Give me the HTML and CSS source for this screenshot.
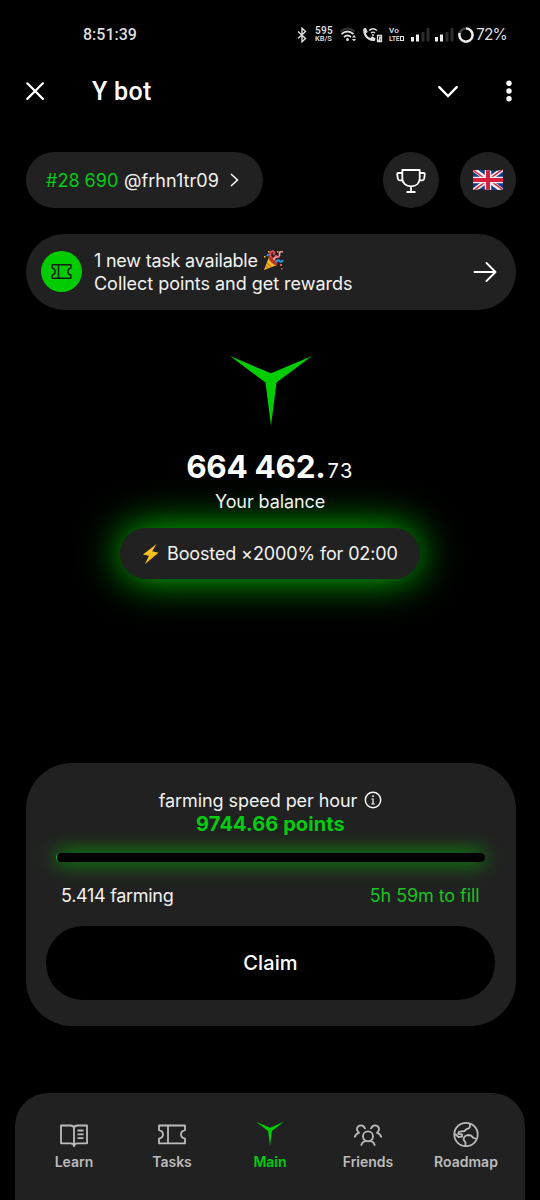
FILE: index.html
```html
<!DOCTYPE html>
<html lang="en">
<head>
<meta charset="utf-8">
<title>Y bot</title>
<link rel="stylesheet" href="styles.css">
</head>
<body>
<div class="app">
  <div class="status">
    <span class="clock">8:51:39</span>
    <div class="status-icons">
      <svg class="bt" width="10" height="16" viewBox="0 0 10 16" fill="none" stroke="#ddd" stroke-width="1.4"><path d="M1 4.500l7.500 7L5 14.800V1.200l3.500 3.300L1 11.500"/></svg>
      <span class="net"><span>595</span><span>KB/S</span></span>
      <svg class="wifi" width="18" height="16" viewBox="0 0 18 16" fill="none" stroke="#ddd" stroke-width="1.700"><path stroke="#333" d="M0.500 4.500Q7.500-1.500 14.500 4.500"/><path d="M1.500 7Q7.500 2 13.500 7M4 10Q7.500 7 11 10"/><circle cx="7.500" cy="12.500" r="1.500" fill="#ddd" stroke="none"/><path fill="#ddd" stroke="none" d="M12 10.500l2-2.500 2 2.500zM12 12l2 2.500 2-2.500z"/></svg>
      <svg class="call" width="21" height="16" viewBox="0 0 21 16" fill="none" stroke="#ddd" stroke-width="1.300"><path fill="#ddd" stroke="none" d="M1.500 1.500L4 1l1.700 4-1.800 1.500c1 2.200 2.200 3.500 4.400 4.600L10 9.300l3.500 2-.5 2.400C6 15.500-.2 8 1.500 1.500z"/><path d="M7 3.500q4-3.500 8 0M9 6q2-1.800 4 0"/><circle cx="11" cy="8" r="1" fill="#ddd" stroke="none"/><path d="M15.500 8.500h4v6h-4zM17 10.500h1.500l-1.500 2.500h1.500"/></svg>
      <span class="net volte"><span>Vo</span><span>LTE<i></i></span></span>
      <svg class="sig" width="19" height="14" viewBox="0 0 19 14"><path fill="#eee" d="M0 9h3v4.500H0zM5 6.500h3v7H5z"/><path fill="#2c2c2c" d="M10.500 4h3v9.500h-3zM15.500 0h3v13.500h-3z"/></svg>
      <svg class="sig2" width="19" height="14" viewBox="0 0 19 14"><path fill="#eee" d="M0 9h3v4.500H0zM5 6.500h3v7H5z"/><path fill="#2c2c2c" d="M10.500 4h3v9.500h-3zM15.500 0h3v13.500h-3z"/></svg>
      <svg class="bat" width="16" height="16" viewBox="0 0 16 16" fill="none" stroke-width="2.400"><circle cx="8" cy="8" r="6.600" stroke="#444"/><path stroke="#eee" d="M8 1.400A6.600 6.600 0 1 1 1.700 6"/></svg>
      <span class="pct">72%</span>
    </div>
  </div>

  <header class="header">
    <svg width="20" height="20" viewBox="0 0 20 20" fill="none" stroke="#fff" stroke-width="2.200" stroke-linecap="round"><path d="M2.300 2.300l15.600 15.600M17.900 2.300L2.300 17.900"/></svg>
    <h1 class="title">Y bot</h1>
    <svg class="chev" width="22" height="14" viewBox="0 0 22 14" fill="none" stroke="#fff" stroke-width="2.400" stroke-linecap="round"><path d="M2.300 3.200L11 12l8.700-8.800"/></svg>
    <svg width="6" height="22" viewBox="0 0 6 22" fill="#fff"><circle cx="3" cy="3.300" r="2.700"/><circle cx="3" cy="11" r="2.700"/><circle cx="3" cy="18.700" r="2.700"/></svg>
  </header>

  <div class="profile-row">
    <div class="profile">
      <span class="rank">#28 690</span><span class="user">@frhn1tr09</span>
      <svg width="9" height="14" viewBox="0 0 9 14" fill="none" stroke="#fff" stroke-width="1.500"><path d="M1 1l6.500 6L1 13"/></svg>
    </div>
    <div class="round trophy">
      <svg width="30" height="26" viewBox="0 0 30 26" fill="none" stroke="#fff" stroke-width="1.800" stroke-linejoin="round"><path d="M6.300 3h17.400v8.300c0 4.900-3.600 8-8.700 8s-8.700-3.100-8.700-8zM6 6H2.200q-1 0-1 1l.6 4.500q.2 1.800 2 1.800h2.700M24 6h3.800q1 0 1 1l-.6 4.500q-.2 1.800-2 1.800h-2.700M15 19.500V25M10.500 25h9"/></svg>
    </div>
    <div class="round">
      <svg width="30" height="22" viewBox="0 0 30 22"><defs><clipPath id="flag"><path d="M0 1.500Q7 0 15 1.200T30 .8v19.500q-7 1.500-15 .5T0 21z"/></clipPath></defs><g clip-path="url(#flag)"><path fill="#173b86" d="M0 0h30v22H0z"/><path stroke="#eee" stroke-width="4.500" d="M0 0l30 22M30 0L0 22"/><path stroke="#d6203f" stroke-width="1.500" d="M0 1l13 9.500M30 0L17 9.500M0 22l13-9.500M30 21l-13-9.500"/><path stroke="#eee" stroke-width="6.500" d="M15 0v22M0 11h30"/><path stroke="#d6203f" stroke-width="4" d="M15 0v22M0 11h30"/></g></svg>
    </div>
  </div>

  <div class="banner">
    <div class="badge"><svg width="21" height="15" viewBox="0 0 28 20" fill="none" stroke="#102010" stroke-width="2" stroke-linejoin="round"><path d="M1.500 1h25v4.200q-4 .8-4 4.800t4 4.800V19h-25v-4.200q4-.8 4-4.800t-4-4.800zM10 1v18"/></svg></div>
    <div class="banner-text">
      <div class="line"><span class="task">1 new task available</span><svg class="party" width="21" height="21" viewBox="0 0 21 21" fill="none"><path fill="#fbb92c" d="M1 20L6 7q5 2 8 8z"/><path stroke="#c96f14" stroke-width="1.200" d="M4 13l4 4M3 16l2 2"/><ellipse cx="10" cy="10.500" rx="2.600" ry="6" transform="rotate(-43 10 10.500)" fill="#b33a28"/><path stroke="#ee4a55" stroke-width="2" d="M8 7q-2-3 0-5 2-1.500 3 0t-1 2.500M10 9q3-1 3-4"/><path stroke="#f29aa0" stroke-width="1.700" d="M11 10q0-3 3-3t2.500-3T20 2"/><path stroke="#2c9be0" stroke-width="2" d="M13 12q2-3 3.500-1t3.500-1M4 6l1.500-2"/><path fill="#f6c63a" d="M5 1h1.500v1.500H5zM14 1h1.500v1.500H14zM1 6h1.500v1.500H1z"/><path fill="#ef5267" d="M17 14h2v2h-2zM15 6h2v1.500h-2zM18 18h1.500v1.500H18z"/></svg></div>
      <div class="line collect">Collect points and get rewards</div>
    </div>
    <svg width="24" height="20" viewBox="0 0 24 20" fill="none" stroke="#fff" stroke-width="1.800" stroke-linecap="round" stroke-linejoin="round"><path d="M1.500 10h21M13.500 1l9 9-9 9"/></svg>
  </div>

  <svg class="logo" width="82" height="70" viewBox="0 0 82 70" fill="#0c0"><path d="M0 0l41 17.300L82 0 46.500 26.500 41 70l-5.500-43.500z"/></svg>
  <div class="balance"><b class="whole">664 462.</b><span class="cents">73</span></div>
  <div class="balance-label">Your balance</div>
  <div class="boost">
    <svg width="17" height="20" viewBox="0 0 17 20"><path fill="#fcc21b" d="M14.500 0L1 10.500l6 1.200L3 20 16.500 8.800l-6.300-1.500z"/><path fill="#f79329" d="M1 10.500l7-1-1 2.200zM16.500 8.800L3 20l9-9.500z" opacity=".4"/></svg>
    <span class="boost-text">Boosted ×2000% for 02:00</span>
  </div>

  <section class="farm">
    <div class="speed"><span>farming speed per hour</span><svg width="18" height="18" viewBox="0 0 18 18" fill="none" stroke="#fff" stroke-width="1.400"><circle cx="9" cy="9" r="7.700"/><path d="M7.500 8H9v5M7.300 13h3.400" stroke-width="1.200"/><circle cx="9" cy="5.200" r=".9" fill="#fff" stroke="none"/></svg></div>
    <div class="points">9744.66 points</div>
    <div class="bar"></div>
    <div class="stats"><span class="farmed">5.414 farming</span><span class="fill">5h 59m to fill</span></div>
    <button class="claim"><span>Claim</span></button>
  </section>

  <nav class="nav">
    <a class="tab"><svg width="28" height="26" viewBox="0 0 28 26" fill="none" stroke="#bbb" stroke-width="1.800" stroke-linejoin="round"><path d="M1 4.500h9.500Q14 4.500 14 7.500q0-3 3.500-3H27v17.800h-9.500q-3.500 0-3.500 3 0-3-3.500-3H1zM14 7.500v17.500M17.500 9.500h6M17.500 13.300h6M17.500 17.100h6"/></svg><span>Learn</span></a>
    <a class="tab"><svg width="28" height="26" viewBox="0 0 28 26" fill="none" stroke="#bbb" stroke-width="1.800" stroke-linejoin="round"><path d="M1 4.500h26v4.700q-4 .9-4 4.200t4 4.200v4.700H1v-4.700q4-.9 4-4.200T1 9.200zM10 4.500v17.800"/></svg><span>Tasks</span></a>
    <a class="tab active"><svg width="28" height="26" viewBox="0 0 28 26" fill="#0c0"><path d="M0 .8l14 6 14-6-12.100 9.100L14 25l-1.900-15.100z"/></svg><span>Main</span></a>
    <a class="tab"><svg width="28" height="26" viewBox="0 0 28 26" fill="none" stroke="#bbb" stroke-width="1.800" stroke-linecap="round"><circle cx="14" cy="15.300" r="5"/><path d="M7.300 24q1-3.200 4-4M20.700 24q-1-3.200-4-4M.9 15.800q.8-3 4-4M27.100 15.800q-.8-3-4-4M5 11.800C.8 8 4 4.300 7 4.300q2.500 0 4 3M23 11.800c4.200-3.800 1-7.500-2-7.500q-2.500 0-4 3"/></svg><span>Friends</span></a>
    <a class="tab"><svg width="28" height="26" viewBox="0 0 28 26" fill="none" stroke="#bbb" stroke-width="1.800" stroke-linejoin="round"><circle cx="14" cy="13.500" r="11.700"/><path d="M18 2.700v2.500q0 2-3.500 3L12.500 10 7 10.800l-1 2 4 .7v2.200l-3.500.3-3.500-3M13.500 25v-3.500l-2-3 1-3 3-1.500 3.500.5 2.500 2.500 3.500 1"/></svg><span>Roadmap</span></a>
  </nav>
</div>
</body>
</html>
```

FILE: styles.css
```css
* { box-sizing: border-box; }
body { margin: 0; background: #000; }
svg { display: block; flex: none; }
.app {
  width: 540px; height: 1200px; overflow: hidden;
  display: flex; flex-direction: column;
  background: #000; color: #f2f2f2;
  font-family: Inter, "Liberation Sans", sans-serif;
  font-size: 18px; white-space: nowrap;
}
.status { display: flex; align-items: center; height: 69px; padding: 0 35px 0 83px; justify-content: space-between; }
.clock { font: 500 16px Roboto, sans-serif; color: #ddd; }
.status-icons { display: flex; align-items: center; }
.net { display: flex; flex-direction: column; margin: 0 6px 0 8px; width: 19px; font-family: Roboto, sans-serif; font-weight: 600; color: #ddd; }
.net span:first-child { font-size: 10px; line-height: 9px; letter-spacing: .3px; }
.net span:last-child { font-size: 7.500px; line-height: 8px; }
.volte { width: 16px; margin: 0 6px 0 6px; }
.net.volte span:first-child { font-size: 8px; line-height: 8px; }
.net.volte span:last-child { font-size: 7px; letter-spacing: -.3px; }
.volte i { display: inline-block; width: 4px; height: 5px; border: 1px solid #ddd; margin-left: 1px; }
.call { margin-left: 4px; }
.sig2 { margin-left: 5px; }
.bat { margin: 0 2px 0 4px; }
.pct { font: 400 15.500px Inter, sans-serif; color: #ddd; width: 29px; letter-spacing: -.8px; }

.header { display: flex; align-items: center; height: 44px; padding: 0 28px 0 25px; }
.title { flex: 1; margin: 0 0 0 47px; font: 500 25px Roboto, sans-serif; letter-spacing: .3px; color: #fff; }
.chev { margin-right: 47px; }

.profile-row { display: flex; margin: 39px 24.500px 0 25.500px; height: 56px; }
.profile { display: flex; align-items: center; width: 237px; height: 56px; padding: 0 0 0 20.500px; border-radius: 28px; background: #212121; margin-right: auto; }
.rank { color: #0c1; width: 78px; }
.user { width: 106px; letter-spacing: .05px; }
.round { display: flex; align-items: center; justify-content: center; width: 56px; height: 56px; border-radius: 50%; background: #212121; }
.trophy { margin-right: 20.500px; }

.banner { display: flex; align-items: center; margin: 25.500px 24.500px 0 25.500px; height: 76.500px; padding: 0 19px 0 15px; border-radius: 38.500px; background: #212121; }
.badge { display: flex; align-items: center; justify-content: center; width: 41px; height: 41px; border-radius: 50%; background: #0c0; }
.banner-text { flex: 1; margin-left: 12.500px; }
.line { display: flex; align-items: center; height: 23px; }
.task { letter-spacing: -.22px; }
.collect { letter-spacing: -.03px; }
.party { margin-left: 5px; }

.logo { margin: 46px 0 0 229.500px; }
.balance { display: flex; align-items: baseline; justify-content: center; height: 38px; margin-top: 22px; line-height: 38px; color: #fff; }
.whole { font-size: 31.500px; font-weight: 700; letter-spacing: -.3px; }
.cents { font-size: 20px; margin-left: 2px; letter-spacing: 1.500px; }
.balance-label { height: 24px; line-height: 24px; margin-top: 4px; text-align: center; letter-spacing: -.1px; position: relative; z-index: 1; }
.boost {
  display: flex; align-items: center; align-self: center; gap: 8px;
  width: 300px; height: 51px; margin-top: 14px; padding-left: 22px; border-radius: 26px;
  background: #212121; box-shadow: 0 0 42px #00cc00;
}
.boost-text { letter-spacing: -.13px; }

.farm { margin: 184px 24.500px 0 25.500px; height: 263px; padding: 25px 20.500px 0; border-radius: 46px; background: #212121; }
.speed { display: flex; align-items: center; justify-content: center; gap: 7px; height: 24px; letter-spacing: -.08px; }
.points { height: 24px; line-height: 25px; text-align: center; font-size: 20px; letter-spacing: .1px; font-weight: 700; color: #0c1; }
.bar { height: 9px; margin: 17px 10px 0; border-radius: 5px; background: #000; box-shadow: 0 0 20px #00cc00; border-left: 1px solid #2a3; }
.stats { display: flex; justify-content: space-between; align-items: center; height: 24px; margin-top: 21px; padding: 0 15.500px 0 15px; }
.farmed { letter-spacing: -.3px; }
.fill { color: #1ac322; letter-spacing: -.08px; }
.claim { display: flex; align-items: center; justify-content: center; width: 449px; height: 74px; margin-top: 19px; padding: 0; border: 0; border-radius: 37px; background: #000; color: #fff; font: 500 20px Inter, sans-serif; letter-spacing: .1px; }

.nav { display: flex; margin: 67px 15px 0; height: 107px; padding: 28px 10px 0; border-radius: 33px 33px 0 0; background: #212121; }
.tab { display: flex; flex-direction: column; align-items: center; width: 98px; color: #bbb; font-size: 14px; font-weight: 600; }
.tab span { height: 18px; line-height: 18px; margin-top: 6px; }
.active { color: #0c1; }
```
